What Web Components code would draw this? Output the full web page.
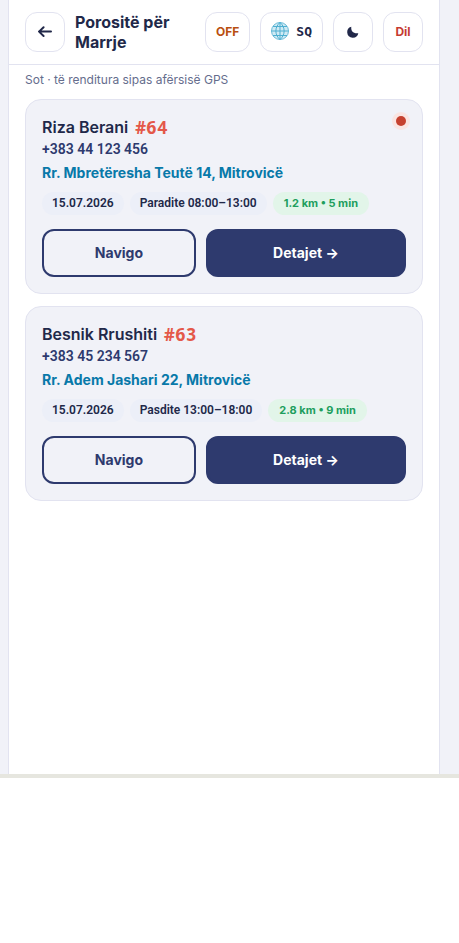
<!DOCTYPE html>
<html lang="sq">
<head>
<meta charset="utf-8">
<meta name="viewport" content="width=device-width, initial-scale=1">
<title>Porositë për Marrje</title>
<style>
:root {
  --ink: #212849;
  --navy: #2e3a6e;
  --line: #e2e3f0;
  --soft: #f1f2f8;
  --pill: #eceff8;
}
body { margin: 0; background: #fff; color: var(--ink); font-family: Inter, "Noto Sans", sans-serif; }
p[slot=note] { margin: 0; color: #656d8d; font-size: 12px; line-height: 18px; }
.off { color: #b95010; }
.exit { color: #c53a31; }
.lang span { font: bold 13px/18px "DejaVu Sans Mono", monospace; }
.lang svg { margin-bottom: 2px; }
</style>
</head>
<body>
<courier-page>
  <top-bar slot="bar" heading="Porositë për Marrje">
    <icon-button slot="back" label="Kthehu">
      <svg width="18" height="18" viewBox="0 0 18 18" fill="none" stroke="currentColor" stroke-width="2" stroke-linecap="round" stroke-linejoin="round"><path d="M15 8.600H3M7.600 4.200 3 8.600l4.600 4.400"/></svg>
    </icon-button>
    <icon-button class="off">OFF</icon-button>
    <icon-button class="lang" label="Gjuha: SQ">
      <svg width="18" height="18" viewBox="0 0 18 18" fill="none"><circle cx="9" cy="9" r="8.5" fill="#cfeaf4" stroke="#6dbbd8"/><path d="M9 .5v17M.5 9h17M2 4.5h14M2 13.5h14M9 .5C3.500 5 3.500 13 9 17.500M9 .5c5.500 4.500 5.500 12.500 0 17" stroke="#4eafd1"/></svg><span>SQ</span>
    </icon-button>
    <icon-button label="Pamja e errët">
      <svg width="14" height="14" viewBox="0 0 14 14"><path fill="currentColor" d="M5.300 1.800C4.700 5.800 7.200 8.900 12.300 8.300A5.600 5.600 0 1 1 5.300 1.800Z"/></svg>
    </icon-button>
    <icon-button class="exit">Dil</icon-button>
  </top-bar>
  <p slot="note">Sot · të renditura sipas afërsisë GPS</p>
  <order-card name="Riza Berani" number="#64" phone="+383 44 123 456" address="Rr. Mbretëresha Teutë 14, Mitrovicë" date="15.07.2026" time="Paradite 08:00–13:00" distance="1.2 km • 5 min" alert></order-card>
  <order-card name="Besnik Rrushiti" number="#63" phone="+383 45 234 567" address="Rr. Adem Jashari 22, Mitrovicë" date="15.07.2026" time="Pasdite 13:00–18:00" distance="2.8 km • 9 min"></order-card>
</courier-page>

<script>
class CourierPage extends HTMLElement {
  constructor() {
    super();
    this.attachShadow({ mode: "open" }).innerHTML = `
      <style>
        :host { display: flex; flex-direction: column; min-height: 100vh; }
        .ground { flex: 1; display: flex; padding: 0 19px 0 8px; background: var(--soft); border-bottom: 4px solid #e6e6df; margin-bottom: 165px; }
        .sheet { flex: 1; min-width: 0; background: #fff; border: solid var(--line); border-width: 0 1px; }
        main { display: flex; flex-direction: column; gap: 10px; padding: 6px 16px 16px; }
        .list { display: flex; flex-direction: column; gap: 12px; }
      </style>
      <div class="ground"><div class="sheet">
        <slot name="bar"></slot>
        <main><slot name="note"></slot><div class="list"><slot></slot></div></main>
      </div></div>`;
  }
}

class TopBar extends HTMLElement {
  constructor() {
    super();
    this.attachShadow({ mode: "open" }).innerHTML = `
      <style>
        :host { display: block; }
        header { display: flex; align-items: center; gap: 10px; padding: 12px 16px; border-bottom: 1px solid var(--line); }
        h1 { flex: 1; min-width: 0; margin: 0; font-size: 16px; font-weight: 700; line-height: 20px; }
      </style>
      <header><slot name="back"></slot><h1></h1><slot></slot></header>`;
  }
  connectedCallback() {
    this.shadowRoot.querySelector("h1").textContent = this.getAttribute("heading");
  }
}

class IconButton extends HTMLElement {
  constructor() {
    super();
    this.attachShadow({ mode: "open" }).innerHTML = `
      <style>
        :host { display: block; flex: none; }
        button { display: flex; align-items: center; justify-content: center; gap: 7px; min-width: 40px; height: 40px; padding: 0 10px; border: 1px solid var(--line); border-radius: 12px; background: #fff; color: inherit; font: 700 12px/18px Inter, sans-serif; cursor: pointer; }
      </style>
      <button type="button"><slot></slot></button>`;
  }
  connectedCallback() {
    if (this.hasAttribute("label")) this.shadowRoot.querySelector("button").setAttribute("aria-label", this.getAttribute("label"));
  }
}

class OrderCard extends HTMLElement {
  constructor() {
    super();
    this.attachShadow({ mode: "open" }).innerHTML = `
      <style>
        :host { display: block; }
        article { position: relative; padding: 16px; background: var(--soft); border: 1px solid var(--line); border-radius: 16px; }
        h2 { display: flex; align-items: center; gap: 7px; margin: 0; font-size: 16px; font-weight: 600; line-height: 22px; }
        .number { color: #e45849; font: bold 18px/22px "Noto Sans Mono", "Noto Sans", monospace; }
        a { display: block; line-height: 23px; text-decoration: none; }
        .phone { color: var(--navy); font-family: Roboto, sans-serif; font-size: 14px; font-weight: 600; }
        .address { color: #0879a9; font-size: 14px; font-weight: 700; }
        .pills { display: flex; flex-wrap: wrap; gap: 6px; margin: 8px 0 14px; font: 600 12px/23px Roboto, sans-serif; }
        .pills span { padding: 0 10px; border-radius: 12px; background: var(--pill); }
        .pills .distance { padding: 0 11px; color: #209e5d; background: #e2f5e9; font-family: Inter, sans-serif; font-size: 11px; font-weight: 700; }
        .actions { display: grid; grid-template-columns: 1fr 1.3fr; gap: 10px; }
        button { height: 48px; padding: 0; border: 2px solid var(--navy); border-radius: 12px; background: transparent; color: var(--navy); font: 700 14px/20px Inter, sans-serif; cursor: pointer; }
        .details { background: var(--navy); color: #fff; }
        .dot { display: none; position: absolute; top: 16px; right: 16px; width: 10px; height: 10px; margin: 0; border-radius: 50%; background: #c6412f; box-shadow: 0 0 0 4px #fae5e2; }
        :host([alert]) .dot { display: block; }
      </style>
      <article>
        <h2><span class="name"></span><span class="number"></span></h2>
        <a class="phone"></a>
        <a class="address" href="#map"></a>
        <div class="pills"><span class="date"></span><span class="time"></span><span class="distance"></span></div>
        <div class="actions"><button type="button">Navigo</button><button type="button" class="details">Detajet →</button></div>
        <i class="dot"></i>
      </article>`;
  }
  connectedCallback() {
    for (const key of ["name", "number", "phone", "address", "date", "time", "distance"])
      this.shadowRoot.querySelector("." + key).textContent = this.getAttribute(key);
    this.shadowRoot.querySelector(".phone").href = "tel:" + this.getAttribute("phone").replaceAll(" ", "");
  }
}

customElements.define("courier-page", CourierPage);
customElements.define("top-bar", TopBar);
customElements.define("icon-button", IconButton);
customElements.define("order-card", OrderCard);
</script>
</body>
</html>
